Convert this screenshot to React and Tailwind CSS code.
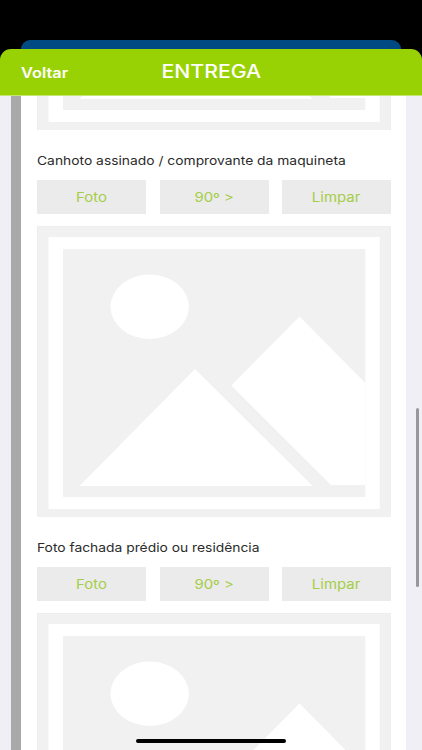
import React from "react";

const photoFields = [
  { id: "canhoto", label: "Canhoto assinado / comprovante da maquineta" },
  { id: "fachada", label: "Foto fachada prédio ou residência" },
];

const PhotoPlaceholder = () => (
  <svg
    viewBox="0 0 354 291.5"
    preserveAspectRatio="none"
    className="block h-[291.5px] w-[354px] shrink-0"
  >
    <rect width="354" height="291.5" fill="#f1f1f1" />
    <rect x="0.25" y="0.25" width="353.5" height="291" fill="none" stroke="#ececec" strokeWidth="0.5" />
    <rect x="11.5" y="11" width="331.2" height="272" fill="#fff" />
    <rect x="26" y="23" width="302.3" height="248" fill="#f1f1f1" />
    <ellipse cx="112.7" cy="80.8" rx="39.2" ry="32.2" fill="#fff" />
    <path d="M158 143 L275.5 260 H42.5 Z" fill="#fff" />
    <path d="M262.5 90.5 L328.3 157 V259 H294 L194.3 159.5 Z" fill="#fff" />
  </svg>
);

const ActionButton = ({ children }) => (
  <button className="flex h-[33.5px] items-center justify-center bg-[#ebebeb] pt-[2px] text-[13px] text-[#a5cd48]">
    <span className="scale-x-[1.15]">{children}</span>
  </button>
);

const PhotoField = ({ label }) => (
  <section className="h-[387.3px] shrink-0 pt-[20px]">
    <h2 className="flex h-[21px] items-center text-[12px] leading-none text-[#2b2b2b]">
      <span className="origin-left scale-x-[1.153] whitespace-nowrap">{label}</span>
    </h2>
    <div className="mt-[9px] grid grid-cols-[109.4px_109px_109px] justify-between">
      <ActionButton>Foto</ActionButton>
      <ActionButton>90º &gt;</ActionButton>
      <ActionButton>Limpar</ActionButton>
    </div>
    <div className="mt-[12.3px]">
      <PhotoPlaceholder />
    </div>
  </section>
);

export default function App() {
  return (
    <div className="relative flex h-[750px] w-[422px] flex-col overflow-hidden bg-black font-['Inter','Liberation_Sans',sans-serif]">
      {/* Previous screen peeking out behind the sheet */}
      <div className="mx-[21px] mt-10 h-[9px] shrink-0 rounded-t-[9px] bg-[#004a84]" />

      <header className="grid h-[47px] shrink-0 grid-cols-[1fr_auto_1fr] items-center rounded-t-[11px] border-b border-[#c5e673] bg-[#99d204] px-[21px] text-white">
        <button className="justify-self-start text-[14px] font-semibold">
          <span className="block origin-left scale-x-[1.17]">Voltar</span>
        </button>
        <h1 className="text-[18px] font-medium leading-none">
          <span className="block scale-x-[1.18]">ENTREGA</span>
        </h1>
      </header>

      <main className="flex min-h-0 flex-1 bg-[#f0eff5] pl-[11px]">
        <div className="w-[10px] bg-[#a9a9a9]" />
        <div className="flex w-[385px] flex-col overflow-hidden bg-white pl-4">
          {/* Tail of the field scrolled under the header */}
          <div className="flex h-[34px] shrink-0 flex-col justify-end overflow-hidden">
            <PhotoPlaceholder />
          </div>
          <div className="w-[354px]">
            {photoFields.map((field) => (
              <PhotoField key={field.id} label={field.label} />
            ))}
          </div>
        </div>
      </main>

      {/* Scroll indicator */}
      <div className="absolute right-[3px] top-[408px] h-[179px] w-[3.5px] rounded-full bg-[#98979d]" />
      {/* Home indicator */}
      <div className="absolute bottom-[7px] left-[136px] h-[4px] w-[150px] rounded-full bg-black" />
    </div>
  );
}
